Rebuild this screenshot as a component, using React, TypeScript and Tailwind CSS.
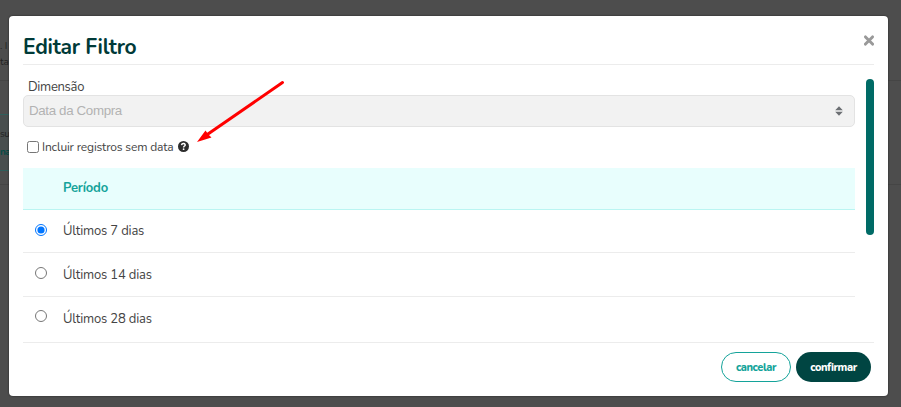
import React from 'react';

const periods = [
  { label: 'Últimos 7 dias', row: 'h-[43px]', radio: 'mb-[3px]' },
  { label: 'Últimos 14 dias', row: 'h-[44px]', radio: 'mb-[3px]' },
  { label: 'Últimos 28 dias', row: 'h-[43px]', radio: 'mb-[5px]' },
];

const PageBehind: React.FC = () => (
  <div className="absolute inset-0 bg-[#4d4d4d] text-[10px] leading-4 text-[#222]">
    <div className="h-[81px] border-b border-[#454545] pt-[38px]">
      <p className="whitespace-pre">. I</p>
      <p>ta</p>
    </div>
    <div className="h-[104px] border-b border-[#454545] pt-[33px]">
      <div className="h-[57px] w-[9px] border-y border-[#2f5f5c] bg-[#484e4e] pt-[11px] tracking-[-0.6px]">
        <p>su</p>
        <p className="mt-[2px] font-bold text-[#064b47]">na</p>
      </div>
    </div>
  </div>
);

const App: React.FC = () => {
  const [selected, setSelected] = React.useState(0);

  return (
    <div className="relative h-[407px] w-[901px] overflow-hidden font-['Nunito',sans-serif]">
      <PageBehind />
      <div
        role="dialog"
        className="relative ml-[9px] mt-[16px] flex h-[380px] w-[879px] flex-col rounded-[4px] bg-white px-[14px] shadow-[0_0_2px_rgba(0,0,0,0.6)]"
      >
        <header className="flex h-[49px] shrink-0 justify-between border-b border-[#ececec]">
          <h1 className="mt-[17px] text-[21px] font-bold leading-[28px] tracking-[-0.25px] text-[#003a38]">
            Editar Filtro
          </h1>
          <button aria-label="Fechar" className="mt-[19px] h-[11px] w-[10px]">
            <svg viewBox="0 0 10 11" className="h-[11px] w-[10px]">
              <path
                d="M1.5 1.9L8.5 9.1M8.5 1.9L1.5 9.1"
                stroke="#999"
                strokeWidth="2.9"
                strokeLinecap="round"
              />
            </svg>
          </button>
        </header>

        <div className="flex h-[278px] shrink-0 justify-between border-b border-[#ececec] pt-[14px]">
          <div className="w-[832px]">
            <label className="ml-[5px] block h-[16px] text-[13px] leading-[17px] tracking-[-0.3px] text-[#444]">
              Dimensão
            </label>
            <div className="flex h-[32px] items-center justify-between rounded-[5px] border border-[#e3e3e3] bg-[#f2f2f2] pl-[5px] pr-[11px]">
              <span className="font-['Liberation_Sans',sans-serif] text-[13.33px] leading-[16px] tracking-[-0.35px] text-[#b3b3b3]">
                Data da Compra
              </span>
              <svg viewBox="0 0 8 10" className="h-[10px] w-[8px]" fill="#6c6f73">
                <path d="M4 0.3L7.8 4.2H0.2ZM0.2 5.8H7.8L4 9.7Z" />
              </svg>
            </div>
            <div className="flex h-[41px] items-center pl-[4px]">
              <input type="checkbox" className="m-0 mb-px h-[12px] w-[12px]" />
              <span className="mb-px ml-[3px] text-[12px] leading-[16px] tracking-[-0.15px] text-[#444]">
                Incluir registros sem data
              </span>
              <svg viewBox="0 0 11 11" className="mb-[2px] ml-[4px] h-[11px] w-[11px]">
                <circle cx="5.5" cy="5.5" r="5.5" fill="#2d2d2d" />
                <path
                  d="M3.5 4.1C3.8 2.8 4.8 2.5 5.7 2.6C7 2.8 7.5 3.7 7 4.5C6.6 5.1 5.6 5.2 5.6 6.4"
                  fill="none"
                  stroke="white"
                  strokeWidth="1.5"
                />
                <circle cx="5.6" cy="8.2" r="0.9" fill="white" />
              </svg>
            </div>
            <div className="flex h-[42px] items-center border-b border-[#baf5f2] bg-[#e8fefd] pl-[40px] text-[13px] font-bold tracking-[-0.2px] text-[#14a39a]">
              Período
            </div>
            {periods.map((period, i) => (
              <label
                key={period.label}
                className={`flex ${period.row} items-center pl-[11px] ${i < 2 ? 'border-b border-[#ececec]' : ''}`}
              >
                <input
                  type="radio"
                  name="period"
                  checked={selected === i}
                  onChange={() => setSelected(i)}
                  className={`m-0 ml-[0.5px] h-[12px] w-[12px] ${period.radio}`}
                />
                <span className="ml-[16.5px] text-[13px] leading-[16px] tracking-[-0.18px] text-[#444]">
                  {period.label}
                </span>
              </label>
            ))}
          </div>
          <div className="h-[156px] w-[8px] rounded-full bg-[#006b66]" />
        </div>

        <footer className="flex justify-end gap-[5px] pr-[3px] pt-[9px] text-[11px] font-extrabold leading-none tracking-[-0.4px]">
          <button className="h-[30px] w-[70px] rounded-full border border-[#14a39a] bg-white text-[#14a39a]">
            cancelar
          </button>
          <button className="h-[30px] w-[75px] rounded-full bg-[#004542] text-white">confirmar</button>
        </footer>
      </div>

      <svg className="pointer-events-none absolute left-[196px] top-[80px]" width="90" height="64" viewBox="0 0 90 64">
        <path d="M86.5 2.5L12 54" stroke="#ff0000" strokeWidth="3" strokeLinecap="round" />
        <path d="M1 62L9.5 50.5L12 54L15.5 57.5Z" fill="#ff0000" />
      </svg>
    </div>
  );
};

export default App;
